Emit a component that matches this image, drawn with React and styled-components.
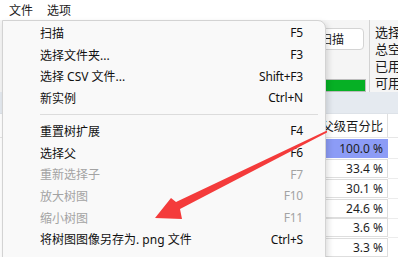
import React from "react";
import styled, { createGlobalStyle } from "styled-components";

const GlobalStyle = createGlobalStyle`
  html, body {
    margin: 0;
    padding: 0;
    background: #ffffff;
  }
  body {
    font-family: "Noto Sans", "Noto Sans CJK SC", sans-serif;
    font-size: 12px;
  }
`;

const Window = styled.div`
  position: relative;
  width: 398px;
  height: 257px;
  overflow: hidden;
  display: flex;
  flex-direction: column;
  background: #f4f4f4;
`;

const MenuBar = styled.div`
  height: 20px;
  display: flex;
  align-items: center;
  padding-left: 2px;
  background: #ffffff;
`;

const MenuBarItem = styled.div`
  padding: 2px 7px 0;
  line-height: 18px;
  color: #1a1a1a;
`;

const Toolbar = styled.div`
  height: 75px;
  display: grid;
  grid-template-columns: 369px 1px 1fr;
  background: #f5f5f5;
`;

const ScanArea = styled.div`
  display: flex;
  flex-direction: column;
  align-items: flex-end;
  padding: 8px 3px 0 0;
`;

const ScanButton = styled.div`
  width: 64px;
  height: 22px;
  margin-right: 2px;
  box-sizing: border-box;
  border: 1px solid #d4d4d4;
  border-radius: 4px;
  background: #ffffff;
  display: flex;
  align-items: center;
  justify-content: center;
  color: #1a1a1a;
`;

const Progress = styled.div`
  width: 200px;
  height: 13px;
  margin-top: 29px;
  box-sizing: border-box;
  border: 1px solid #bcbcbc;
  background: #06b025;
`;

const VSep = styled.div`
  background: #d2d2d2;
`;

const InfoList = styled.div`
  padding: 4px 0 0 5px;
  display: flex;
  flex-direction: column;
  white-space: nowrap;
  font-size: 13px;
  line-height: 17px;
  color: #1a1a1a;
`;

const Band = styled.div`
  height: 23px;
  background: #e5eaf0;
  border-bottom: 1px solid #dde2e8;
`;

const Table = styled.div`
  flex: 1;
  background: #ffffff;
`;

const TableRow = styled.div`
  display: grid;
  grid-template-columns: 316px 72px 1fr;
  height: ${(p) => (p.$header ? "23px" : "18.8px")};
  border-bottom: 1px solid ${(p) => (p.$header ? "#e6e6e6" : "transparent")};
`;

const HeaderCell = styled.div`
  display: flex;
  align-items: center;
  justify-content: flex-end;
  padding-right: 4px;
  border-right: 1px solid #e0e0e0;
  font-size: 12.3px;
  color: #1a1a1a;
  white-space: nowrap;
`;

const Cell = styled.div`
  margin: 1px 0 1px 0;
  box-sizing: border-box;
  border: 1px solid ${(p) => (p.$selected ? "#8c9cf6" : "#dedede")};
  background: ${(p) => (p.$selected ? "#8c9cf6" : "#ffffff")};
  display: flex;
  align-items: center;
  justify-content: flex-end;
  padding-right: 4px;
  color: #1e1e1e;
  font-size: 12px;
`;

const Filler = styled.div`
  border-bottom: 1px solid #ececec;
`;

const Menu = styled.div`
  position: absolute;
  left: 2px;
  top: 20px;
  width: 324px;
  height: 250px;
  box-sizing: border-box;
  padding-top: 1px;
  background: #f9f9f9;
  border: 1px solid #d3d3d3;
  border-radius: 0 8px 8px 8px;
  box-shadow: 2px 3px 6px rgba(0, 0, 0, 0.14);
`;

const MenuItem = styled.div`
  height: 21.7px;
  display: flex;
  align-items: center;
  justify-content: space-between;
  padding: 0 22px 0 37px;
  color: ${(p) => (p.$disabled ? "#a3a3a3" : "#111111")};
  white-space: nowrap;
`;

const Shortcut = styled.span`
  font-family: "Noto Sans", sans-serif;
  letter-spacing: -0.2px;
`;

const Separator = styled.div`
  height: 11.3px;
  display: flex;
  align-items: center;
  padding: 0 7px 0 37px;
  &::after {
    content: "";
    flex: 1;
    height: 1px;
    background: #dcdcdc;
  }
`;

const Overlay = styled.svg`
  position: absolute;
  left: 0;
  top: 0;
  pointer-events: none;
`;

const topItems = [
  ["扫描", "F5"],
  ["选择文件夹...", "F3"],
  ["选择 CSV 文件...", "Shift+F3"],
  ["新实例", "Ctrl+N"],
];

const bottomItems = [
  ["重置树扩展", "F4"],
  ["选择父", "F6"],
  ["重新选择子", "F7", true],
  ["放大树图", "F10", true],
  ["缩小树图", "F11", true],
  ["将树图图像另存为. png 文件", "Ctrl+S"],
];

const percents = ["100.0 %", "33.4 %", "30.1 %", "24.6 %", "3.6 %", "3.3 %"];

export default function App() {
  return (
    <>
      <GlobalStyle />
      <Window>
        <MenuBar>
          <MenuBarItem>文件</MenuBarItem>
          <MenuBarItem>选项</MenuBarItem>
        </MenuBar>
        <Toolbar>
          <ScanArea>
            <ScanButton>扫描</ScanButton>
            <Progress />
          </ScanArea>
          <VSep />
          <InfoList>
            <span>选择</span>
            <span>总空</span>
            <span>已用</span>
            <span>可用</span>
          </InfoList>
        </Toolbar>
        <Band />
        <Table>
          <TableRow $header>
            <div />
            <HeaderCell>父级百分比</HeaderCell>
            <div />
          </TableRow>
          {percents.map((p, i) => (
            <TableRow key={p}>
              <div />
              <Cell $selected={i === 0}>{p}</Cell>
              <Filler />
            </TableRow>
          ))}
        </Table>

        <Menu>
          {topItems.map(([label, key]) => (
            <MenuItem key={label}>
              <span>{label}</span>
              <Shortcut>{key}</Shortcut>
            </MenuItem>
          ))}
          <Separator />
          {bottomItems.map(([label, key, disabled]) => (
            <MenuItem key={label} $disabled={disabled}>
              <span>{label}</span>
              <Shortcut>{key}</Shortcut>
            </MenuItem>
          ))}
        </Menu>

        {/* red annotation arrow */}
        <Overlay width="398" height="257" viewBox="0 0 398 257">
          <polygon
            points="155,218 171,198 176,202 327,130.5 327,132.5 180,209 182,219"
            fill="#f43b3b"
          />
        </Overlay>
      </Window>
    </>
  );
}
